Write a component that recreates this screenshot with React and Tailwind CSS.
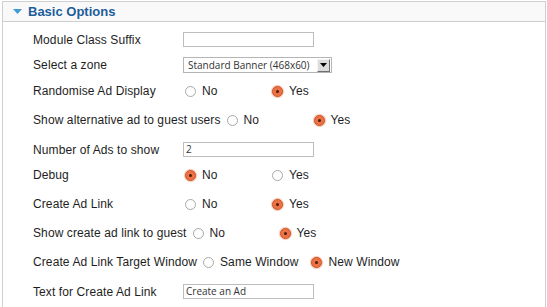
const Radio = ({ checked }) =>
    checked ? (
        <span className="ml-[2px] mr-[6px] w-[11px] h-[11px] shrink-0 rounded-full border border-[#c9582f] bg-[#ec7246] shadow-[0_0_1px_1px_#f3c2ac] flex items-center justify-center">
            <span className="w-[3px] h-[3px] rounded-full bg-[#4a1d0e]"></span>
        </span>
    ) : (
        <span className="ml-[2px] mr-[6px] w-[11px] h-[11px] shrink-0 rounded-full border border-[#a8a8a8] bg-white"></span>
    );

const RadioGroup = ({ options, value }) => (
    <div className="flex items-center">
        {options.map((o) => (
            <div key={o} className="flex items-center">
                <Radio checked={o === value} />
                <span className="min-w-[68px] pr-[11px] whitespace-nowrap">{o}</span>
            </div>
        ))}
    </div>
);

const TextBox = ({ value }) => (
    <div className="w-[131px] h-[15px] border border-[#bdbdbd] bg-white flex items-center pl-[2px] text-[10px] tracking-normal text-[#333] font-['Open_Sans',sans-serif]">
        {value}
    </div>
);

const Select = ({ value }) => (
    <div className="w-[149px] h-[16px] border border-[#b5b5b5] bg-white flex items-center tracking-normal">
        <span className="flex-1 pl-[4px] text-[10px] text-[#333] font-['Open_Sans',sans-serif] whitespace-nowrap">{value}</span>
        <span className="w-[13px] h-[13px] mr-[1px] bg-[#dcdcdc] border-t border-l border-t-[#f4f4f4] border-l-[#f4f4f4] border-r border-b border-r-[#6f6f6f] border-b-[#6f6f6f] flex items-center justify-center">
            <svg width="7" height="4" viewBox="0 0 7 4">
                <path d="M0 0h7L3.5 4z" fill="#000" />
            </svg>
        </span>
    </div>
);

const rows = [
    { label: "Module Class Suffix", h: "h-[25px]", field: <TextBox value="" /> },
    { label: "Select a zone", h: "h-[26px]", field: <Select value="Standard Banner (468x60)" /> },
    { label: "Randomise Ad Display", h: "h-[26px]", field: <RadioGroup options={["No", "Yes"]} value="Yes" /> },
    { label: "Show alternative ad to guest users", h: "h-[32px]", field: <RadioGroup options={["No", "Yes"]} value="Yes" /> },
    { label: "Number of Ads to show", h: "h-[27px]", field: <TextBox value="2" /> },
    { label: "Debug", h: "h-[24px]", field: <RadioGroup options={["No", "Yes"]} value="No" /> },
    { label: "Create Ad Link", h: "h-[34px]", field: <RadioGroup options={["No", "Yes"]} value="Yes" /> },
    { label: "Show create ad link to guest", h: "h-[24px]", field: <RadioGroup options={["No", "Yes"]} value="Yes" /> },
    { label: "Create Ad Link Target Window", h: "h-[34px]", field: <RadioGroup options={["Same Window", "New Window"]} value="New Window" /> },
    { label: "Text for Create Ad Link", h: "h-[25px]", field: <TextBox value="Create an Ad" /> },
];

export default function App() {
    return (
        <div className="w-[547px] h-[307px] bg-white overflow-hidden pt-[1px] pl-[2px] pr-[1px] font-['Liberation_Sans',Arial,sans-serif]">
            <div className="border border-[#cfcfcf] border-b-0 h-[320px]">
                {/* Header */}
                <div className="h-[20px] bg-[#f9f9f9] border-b border-[#cfcfcf] flex items-center pl-[10px]">
                    <svg width="9" height="5" viewBox="0 0 9 5" className="mr-[6px]">
                        <path d="M0 0h9L4.5 5z" fill="#3d9bd8" />
                    </svg>
                    <span className="text-[13px] font-bold text-[#1c5e9c]">Basic Options</span>
                </div>

                {/* Options */}
                <div className="pt-[5px] pl-[30px] text-[12px] tracking-[0.1px] text-[#1e1e1e]">
                    {rows.map((r) => (
                        <div key={r.label} className={`${r.h} flex items-center`}>
                            <span className="min-w-[146px] mr-[4px] whitespace-nowrap">{r.label}</span>
                            {r.field}
                        </div>
                    ))}
                </div>
            </div>
        </div>
    );
}
